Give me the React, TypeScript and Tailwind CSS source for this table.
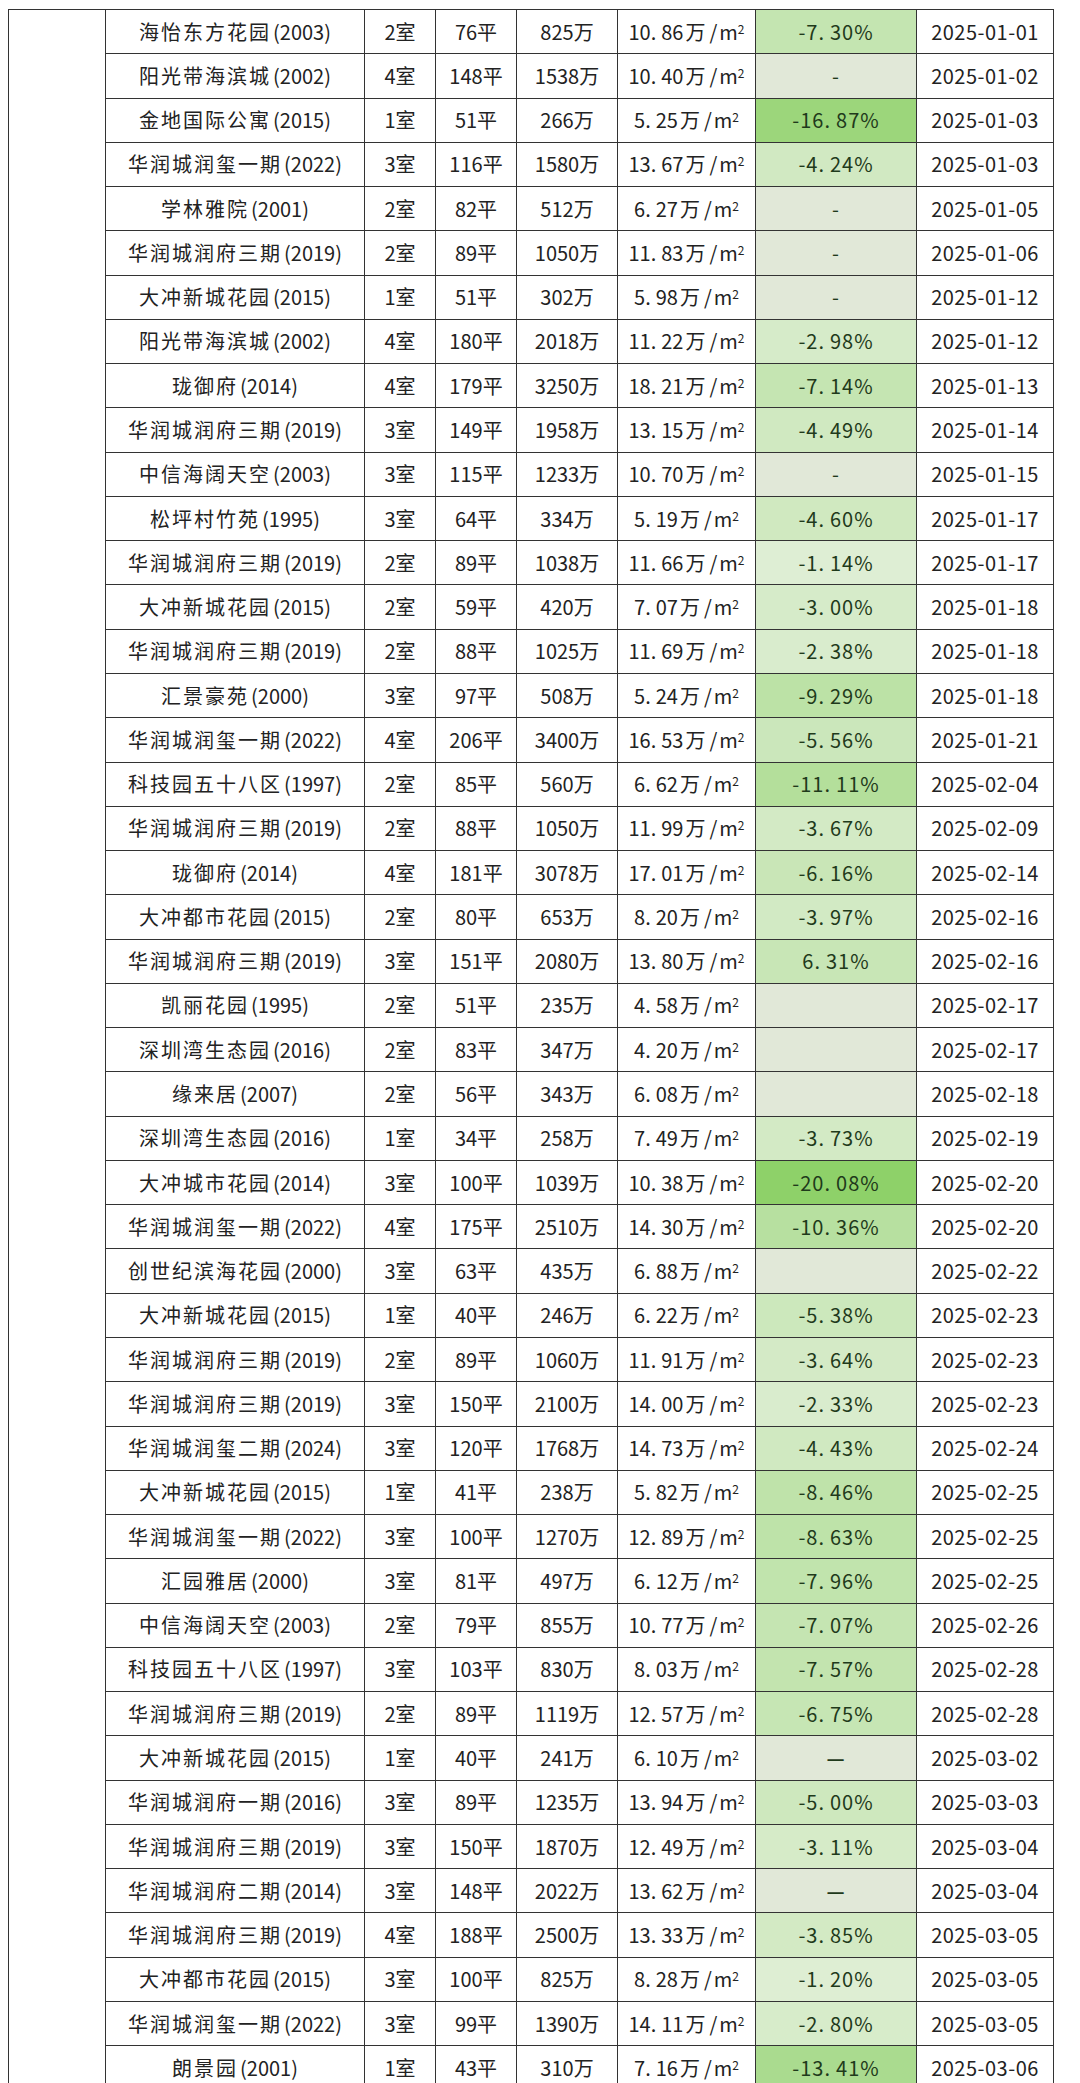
import React from "react";

type Row = [string, string, string, string, string, string, string];

const rows: Row[] = [
  ["海怡东方花园(2003)", "2室", "76平", "825万", "10.86", "-7.30%", "2025-01-01"],
  ["阳光带海滨城(2002)", "4室", "148平", "1538万", "10.40", "-", "2025-01-02"],
  ["金地国际公寓(2015)", "1室", "51平", "266万", "5.25", "-16.87%", "2025-01-03"],
  ["华润城润玺一期(2022)", "3室", "116平", "1580万", "13.67", "-4.24%", "2025-01-03"],
  ["学林雅院(2001)", "2室", "82平", "512万", "6.27", "-", "2025-01-05"],
  ["华润城润府三期(2019)", "2室", "89平", "1050万", "11.83", "-", "2025-01-06"],
  ["大冲新城花园(2015)", "1室", "51平", "302万", "5.98", "-", "2025-01-12"],
  ["阳光带海滨城(2002)", "4室", "180平", "2018万", "11.22", "-2.98%", "2025-01-12"],
  ["珑御府(2014)", "4室", "179平", "3250万", "18.21", "-7.14%", "2025-01-13"],
  ["华润城润府三期(2019)", "3室", "149平", "1958万", "13.15", "-4.49%", "2025-01-14"],
  ["中信海阔天空(2003)", "3室", "115平", "1233万", "10.70", "-", "2025-01-15"],
  ["松坪村竹苑(1995)", "3室", "64平", "334万", "5.19", "-4.60%", "2025-01-17"],
  ["华润城润府三期(2019)", "2室", "89平", "1038万", "11.66", "-1.14%", "2025-01-17"],
  ["大冲新城花园(2015)", "2室", "59平", "420万", "7.07", "-3.00%", "2025-01-18"],
  ["华润城润府三期(2019)", "2室", "88平", "1025万", "11.69", "-2.38%", "2025-01-18"],
  ["汇景豪苑(2000)", "3室", "97平", "508万", "5.24", "-9.29%", "2025-01-18"],
  ["华润城润玺一期(2022)", "4室", "206平", "3400万", "16.53", "-5.56%", "2025-01-21"],
  ["科技园五十八区(1997)", "2室", "85平", "560万", "6.62", "-11.11%", "2025-02-04"],
  ["华润城润府三期(2019)", "2室", "88平", "1050万", "11.99", "-3.67%", "2025-02-09"],
  ["珑御府(2014)", "4室", "181平", "3078万", "17.01", "-6.16%", "2025-02-14"],
  ["大冲都市花园(2015)", "2室", "80平", "653万", "8.20", "-3.97%", "2025-02-16"],
  ["华润城润府三期(2019)", "3室", "151平", "2080万", "13.80", "6.31%", "2025-02-16"],
  ["凯丽花园(1995)", "2室", "51平", "235万", "4.58", "", "2025-02-17"],
  ["深圳湾生态园(2016)", "2室", "83平", "347万", "4.20", "", "2025-02-17"],
  ["缘来居(2007)", "2室", "56平", "343万", "6.08", "", "2025-02-18"],
  ["深圳湾生态园(2016)", "1室", "34平", "258万", "7.49", "-3.73%", "2025-02-19"],
  ["大冲城市花园(2014)", "3室", "100平", "1039万", "10.38", "-20.08%", "2025-02-20"],
  ["华润城润玺一期(2022)", "4室", "175平", "2510万", "14.30", "-10.36%", "2025-02-20"],
  ["创世纪滨海花园(2000)", "3室", "63平", "435万", "6.88", "", "2025-02-22"],
  ["大冲新城花园(2015)", "1室", "40平", "246万", "6.22", "-5.38%", "2025-02-23"],
  ["华润城润府三期(2019)", "2室", "89平", "1060万", "11.91", "-3.64%", "2025-02-23"],
  ["华润城润府三期(2019)", "3室", "150平", "2100万", "14.00", "-2.33%", "2025-02-23"],
  ["华润城润玺二期(2024)", "3室", "120平", "1768万", "14.73", "-4.43%", "2025-02-24"],
  ["大冲新城花园(2015)", "1室", "41平", "238万", "5.82", "-8.46%", "2025-02-25"],
  ["华润城润玺一期(2022)", "3室", "100平", "1270万", "12.89", "-8.63%", "2025-02-25"],
  ["汇园雅居(2000)", "3室", "81平", "497万", "6.12", "-7.96%", "2025-02-25"],
  ["中信海阔天空(2003)", "2室", "79平", "855万", "10.77", "-7.07%", "2025-02-26"],
  ["科技园五十八区(1997)", "3室", "103平", "830万", "8.03", "-7.57%", "2025-02-28"],
  ["华润城润府三期(2019)", "2室", "89平", "1119万", "12.57", "-6.75%", "2025-02-28"],
  ["大冲新城花园(2015)", "1室", "40平", "241万", "6.10", "—", "2025-03-02"],
  ["华润城润府一期(2016)", "3室", "89平", "1235万", "13.94", "-5.00%", "2025-03-03"],
  ["华润城润府三期(2019)", "3室", "150平", "1870万", "12.49", "-3.11%", "2025-03-04"],
  ["华润城润府二期(2014)", "3室", "148平", "2022万", "13.62", "—", "2025-03-04"],
  ["华润城润府三期(2019)", "4室", "188平", "2500万", "13.33", "-3.85%", "2025-03-05"],
  ["大冲都市花园(2015)", "3室", "100平", "825万", "8.28", "-1.20%", "2025-03-05"],
  ["华润城润玺一期(2022)", "3室", "99平", "1390万", "14.11", "-2.80%", "2025-03-05"],
  ["朗景园(2001)", "1室", "43平", "310万", "7.16", "-13.41%", "2025-03-06"],
];

const base = [0xe3, 0xf0, 0xda];
const full = [0x8e, 0xd1, 0x69];

function cellColor(v: string): string {
  const n = parseFloat(v);
  if (isNaN(n)) return "#e1e8d8";
  const t = Math.min(1, Math.abs(n) / 20.08);
  const c = base.map((b, i) => Math.round(b + (full[i] - b) * t));
  return `rgb(${c[0]},${c[1]},${c[2]})`;
}

function Num({ s }: { s: string }) {
  const i = s.indexOf(".");
  if (i < 0) return <>{s}</>;
  return (
    <>
      {s.slice(0, i)}
      <span className="mr-[5px]">.</span>
      {s.slice(i + 1)}
    </>
  );
}

const cell =
  "h-[44.28px] border-r border-b border-[#333] flex items-center justify-center whitespace-nowrap";

export default function App() {
  return (
    <div
      className="min-h-screen bg-white text-[#222] pt-[9px]"
      style={{ fontFamily: '"Noto Sans CJK SC", "Noto Sans", sans-serif' }}
    >
      <div className="ml-[8px] w-[1046px] flex border-l border-t border-[#333]">
        <div className="w-[96px] shrink-0" />
        <div className="grid grid-cols-[259px_71px_81px_101px_138px_161px_137px] border-l border-[#333] text-[20px]">
          {rows.map((r, i) => (
            <React.Fragment key={i}>
              <div className={cell}>
                <span className="tracking-[2px]">{r[0].replace(/\(.*$/, "")}</span>
                <span className="ml-[2px]">{r[0].slice(r[0].indexOf("("))}</span>
              </div>
              <div className={cell}>{r[1]}</div>
              <div className={cell}>{r[2]}</div>
              <div className={cell}>{r[3]}</div>
              <div className={cell}>
                <Num s={r[4]} />
                <span className="ml-[2px]">万</span>
                <span className="ml-[4px] mr-[2px]">/</span>
                <span>
                  m<sup className="text-[12px]">2</sup>
                </span>
              </div>
              <div
                className={cell + " text-[#1f3a1b] tracking-[1px]"}
                style={{ backgroundColor: cellColor(r[5]) }}
              >
                {r[5] === "—" ? (
                  <span className="font-bold">—</span>
                ) : r[5] === "-" ? (
                  <span>-</span>
                ) : (
                  <Num s={r[5]} />
                )}
              </div>
              <div className={cell + " tracking-[0.5px]"}>{r[6]}</div>
            </React.Fragment>
          ))}
        </div>
      </div>
    </div>
  );
}
